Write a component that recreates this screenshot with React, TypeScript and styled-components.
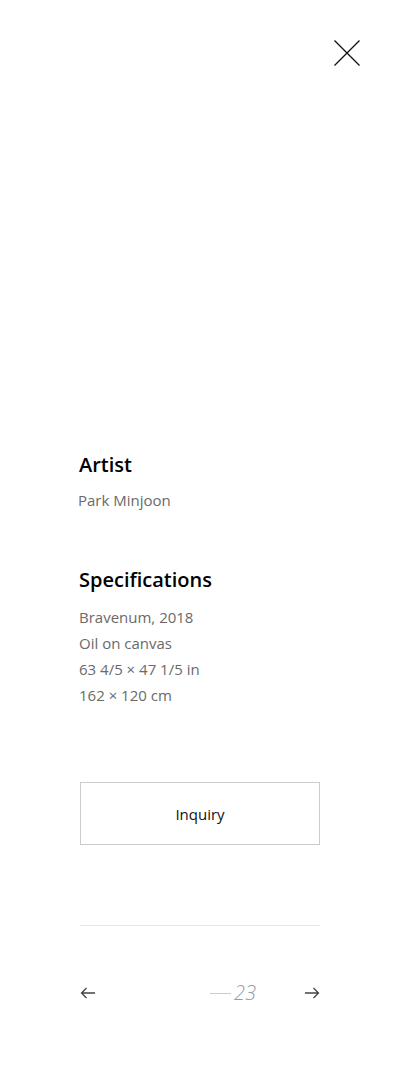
import { createGlobalStyle, styled } from 'styled-components';

const GlobalStyle = createGlobalStyle`
  html, body {
    margin: 0;
    padding: 0;
    background: #ffffff;
  }
  body {
    font-family: 'Open Sans', 'Liberation Sans', sans-serif;
    color: #111;
  }
`;

const Page = styled.div`
  width: 400px;
  min-height: 1080px;
  background: #fff;
`;

const Header = styled.header`
  display: flex;
  justify-content: flex-end;
  padding: 39px 39px 0;
  height: 388px;
  box-sizing: border-box;
`;

const CloseButton = styled.button`
  width: 28px;
  height: 28px;
  padding: 0;
  border: none;
  background: transparent;
  cursor: pointer;
`;

const Content = styled.main`
  padding: 63px 80px 0;
`;

const Section = styled.section<{ gap: number }>`
  display: flex;
  flex-direction: column;
  gap: ${({ gap }) => gap}px;
  margin: 0 0 53px -1px;
`;

const Heading = styled.h2`
  margin: 0;
  font-size: 20px;
  line-height: 28px;
  font-weight: 600;
  color: #000;
`;

const Text = styled.p<{ indent?: number }>`
  margin: 0;
  margin-left: ${({ indent }) => indent ?? 0}px;
  font-size: 15px;
  line-height: 26px;
  font-weight: 400;
  color: #6a6a6a;
`;

const Lines = styled.div`
  display: flex;
  flex-direction: column;
`;

const InquiryButton = styled.button`
  display: block;
  width: 240px;
  height: 63px;
  margin-top: 74px;
  border: 1px solid #ccc;
  background: #fff;
  font-family: 'Open Sans', 'Liberation Sans', sans-serif;
  font-size: 15px;
  color: #111;
  cursor: pointer;
`;

const Divider = styled.hr`
  margin: 80px 0 0;
  border: none;
  border-top: 1px solid #e6e6e6;
`;

const Nav = styled.nav`
  display: flex;
  align-items: center;
  height: 30px;
  margin-top: 52px;
`;

const ArrowButton = styled.button`
  display: flex;
  padding: 0;
  border: none;
  background: transparent;
  cursor: pointer;
`;

const Pager = styled.div`
  display: flex;
  align-items: center;
  gap: 3px;
  margin-left: auto;
  margin-right: 48px;
`;

const Dash = styled.span`
  width: 21px;
  height: 1px;
  background: #ccc;
`;

const PageNumber = styled.span`
  font-size: 20px;
  font-style: italic;
  font-weight: 300;
  color: #999;
  line-height: 30px;
`;

const Arrow = ({ dir }: { dir: 'left' | 'right' }) => (
  <svg width="16" height="12" viewBox="0 0 16 12" fill="none">
    {dir === 'left' ? (
      <path d="M15 6H1.5M6.5 1L1.5 6l5 5" stroke="#444" strokeWidth="1.3" />
    ) : (
      <path d="M1 6h13.5M9.5 1l5 5-5 5" stroke="#444" strokeWidth="1.3" />
    )}
  </svg>
);

const App = () => {
  return (
    <Page>
      <GlobalStyle />
      <Header>
        <CloseButton aria-label="Close">
          <svg width="28" height="28" viewBox="0 0 28 28">
            <path d="M1.5 1.5l25 25M26.5 1.5l-25 25" stroke="#111" strokeWidth="1.3" />
          </svg>
        </CloseButton>
      </Header>
      <Content>
        <Section gap={8}>
          <Heading>Artist</Heading>
          <Text indent={-1}>Park Minjoon</Text>
        </Section>
        <Section gap={10}>
          <Heading>Specifications</Heading>
          <Lines>
            <Text>Bravenum, 2018</Text>
            <Text>Oil on canvas</Text>
            <Text>63 4/5 × 47 1/5 in</Text>
            <Text>162 × 120 cm</Text>
          </Lines>
        </Section>
        <InquiryButton>Inquiry</InquiryButton>
        <Divider />
        <Nav>
          <ArrowButton aria-label="Previous">
            <Arrow dir="left" />
          </ArrowButton>
          <Pager>
            <Dash />
            <PageNumber>23</PageNumber>
          </Pager>
          <ArrowButton aria-label="Next">
            <Arrow dir="right" />
          </ArrowButton>
        </Nav>
      </Content>
    </Page>
  );
};

export default App;
